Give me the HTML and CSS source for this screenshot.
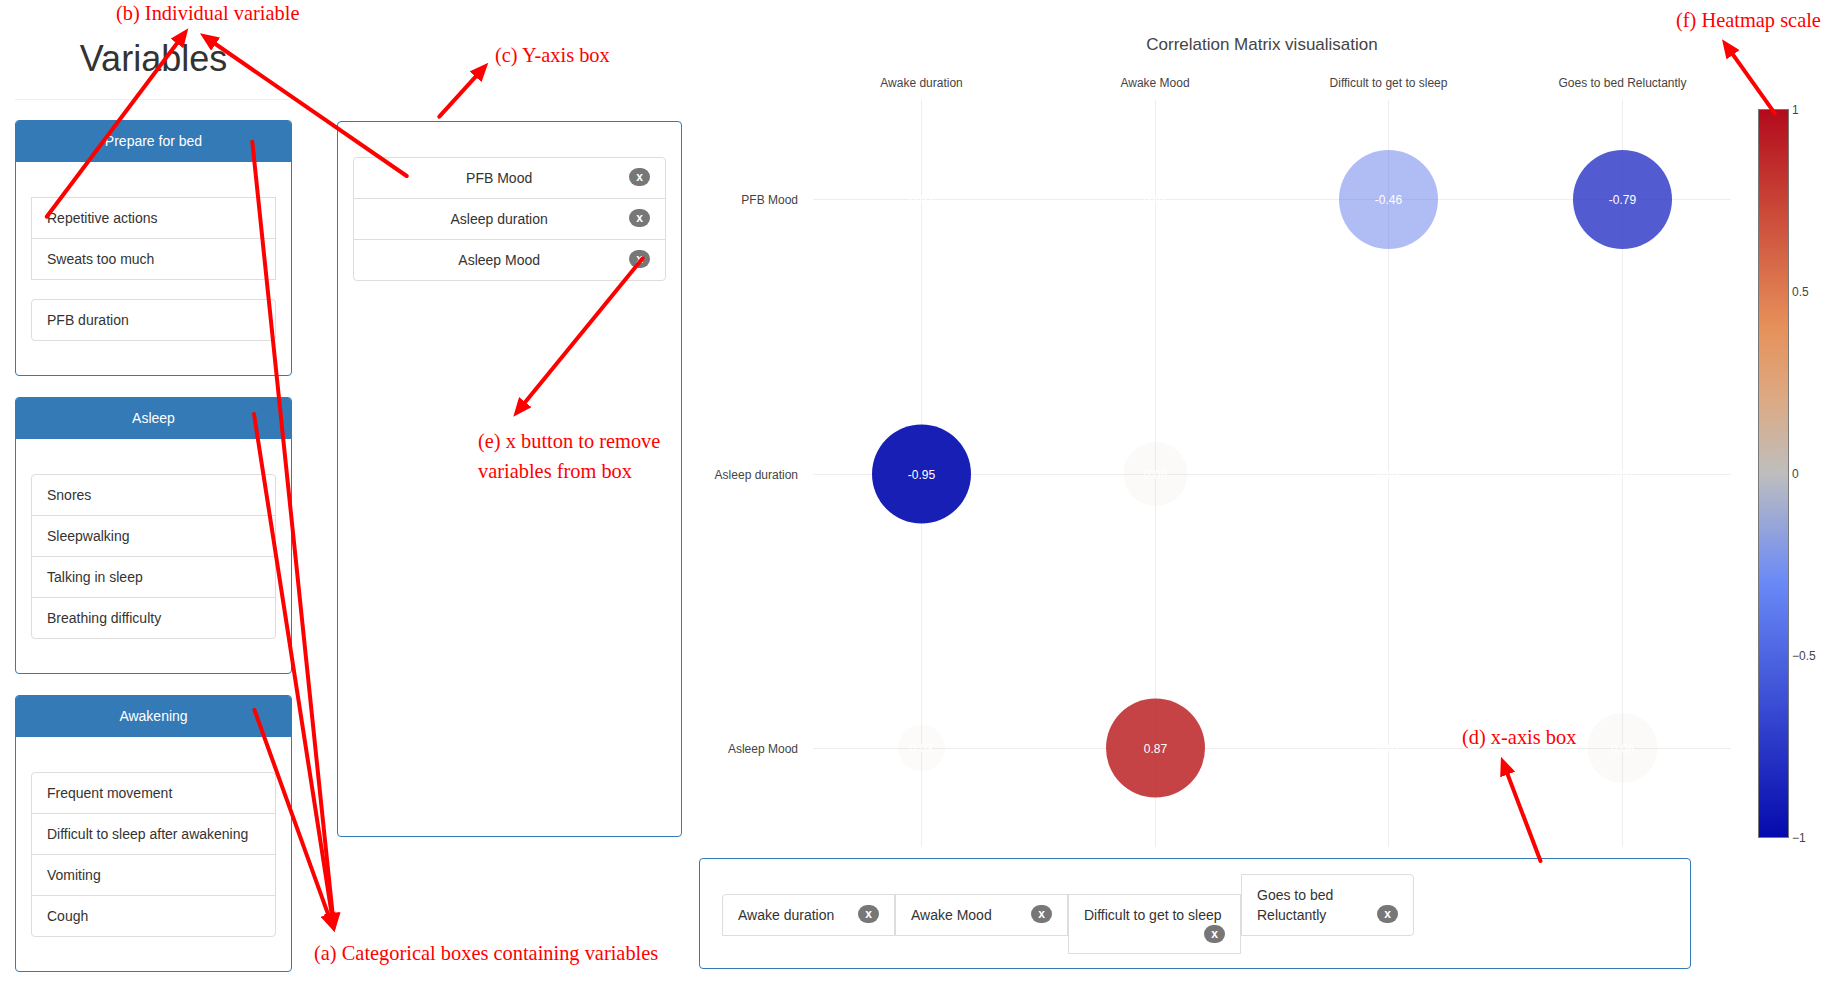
FILE: index.html
```html
<!DOCTYPE html>
<html>
<head>
<meta charset="utf-8">
<title>Correlation Matrix</title>
<link rel="stylesheet" href="styles.css">
</head>
<body>
<div class="page">
  <div class="left">
    <h1 class="title">Variables</h1>
    <hr class="rule">
    <div class="panel">
      <div class="panel-heading">Prepare for bed</div>
      <div class="panel-body">
        <ul class="list-group square">
          <li class="list-group-item">Repetitive actions</li>
          <li class="list-group-item">Sweats too much</li>
        </ul>
        <ul class="list-group">
          <li class="list-group-item">PFB duration</li>
        </ul>
      </div>
    </div>
    <div class="panel">
      <div class="panel-heading">Asleep</div>
      <div class="panel-body">
        <ul class="list-group">
          <li class="list-group-item">Snores</li>
          <li class="list-group-item">Sleepwalking</li>
          <li class="list-group-item">Talking in sleep</li>
          <li class="list-group-item">Breathing difficulty</li>
        </ul>
      </div>
    </div>
    <div class="panel">
      <div class="panel-heading">Awakening</div>
      <div class="panel-body">
        <ul class="list-group">
          <li class="list-group-item">Frequent movement</li>
          <li class="list-group-item">Difficult to sleep after awakening</li>
          <li class="list-group-item">Vomiting</li>
          <li class="list-group-item">Cough</li>
        </ul>
      </div>
    </div>
  </div>

  <div class="ycol">
    <div class="ybox">
      <ul class="list-group centered">
        <li class="list-group-item">PFB Mood<span class="badge">x</span></li>
        <li class="list-group-item">Asleep duration<span class="badge">x</span></li>
        <li class="list-group-item">Asleep Mood<span class="badge">x</span></li>
      </ul>
    </div>
  </div>

  <div class="right">
    <svg class="chart" width="1151" height="850" viewBox="690 0 1151 850" xmlns="http://www.w3.org/2000/svg">
      <defs>
        <linearGradient id="rdbu" x1="0" y1="0" x2="0" y2="1">
          <stop offset="0" stop-color="rgb(178,10,28)"/>
          <stop offset="0.3" stop-color="rgb(230,145,90)"/>
          <stop offset="0.4" stop-color="rgb(220,170,132)"/>
          <stop offset="0.5" stop-color="rgb(190,190,190)"/>
          <stop offset="0.65" stop-color="rgb(106,137,247)"/>
          <stop offset="1" stop-color="rgb(5,10,172)"/>
        </linearGradient>
      </defs>

      <text class="ctitle" x="1262" y="49.5" text-anchor="middle">Correlation Matrix visualisation</text>

      <g class="grid">
        <line x1="813" y1="199.5" x2="1731" y2="199.5"/>
        <line x1="813" y1="474.5" x2="1731" y2="474.5"/>
        <line x1="813" y1="748.5" x2="1731" y2="748.5"/>
        <line x1="921.5" y1="100" x2="921.5" y2="847"/>
        <line x1="1155.5" y1="100" x2="1155.5" y2="847"/>
        <line x1="1388.5" y1="100" x2="1388.5" y2="847"/>
        <line x1="1622.5" y1="100" x2="1622.5" y2="847"/>
      </g>

      <g class="axis">
        <text x="921.5" y="87" text-anchor="middle">Awake duration</text>
        <text x="1155" y="87" text-anchor="middle">Awake Mood</text>
        <text x="1388.5" y="87" text-anchor="middle">Difficult to get to sleep</text>
        <text x="1622.5" y="87" text-anchor="middle">Goes to bed Reluctantly</text>
        <text x="798" y="204" text-anchor="end">PFB Mood</text>
        <text x="798" y="478.5" text-anchor="end">Asleep duration</text>
        <text x="798" y="753" text-anchor="end">Asleep Mood</text>
      </g>

      <g class="bubbles">
        <circle cx="1388.5" cy="199.5" r="49.5" fill="rgb(83,108,230)" fill-opacity="0.46"/>
        <circle cx="1622.5" cy="199.5" r="49.5" fill="rgb(35,48,195)" fill-opacity="0.79"/>
        <circle cx="921.5" cy="474" r="49.5" fill="rgb(12,19,177)" fill-opacity="0.95"/>
        <circle cx="1155.5" cy="474" r="32" fill="rgb(205,185,165)" fill-opacity="0.07"/>
        <circle cx="921.5" cy="748" r="23.5" fill="rgb(205,185,165)" fill-opacity="0.05"/>
        <circle cx="1155.5" cy="748" r="49.5" fill="rgb(189,39,41)" fill-opacity="0.87"/>
        <circle cx="1622.5" cy="748" r="35" fill="rgb(205,185,165)" fill-opacity="0.07"/>
      </g>

      <g class="vals">
        <text x="921.5" y="204">0.02</text>
        <text x="1155.5" y="204">0.01</text>
        <text x="1388.5" y="204">-0.46</text>
        <text x="1622.5" y="204">-0.79</text>
        <text x="921.5" y="478.5">-0.95</text>
        <text x="1155.5" y="478.5">0.05</text>
        <text x="1388.5" y="478.5">0.01</text>
        <text x="1622.5" y="478.5">0.02</text>
        <text x="921.5" y="752.5">0.03</text>
        <text x="1155.5" y="752.5">0.87</text>
        <text x="1388.5" y="752.5">0.01</text>
        <text x="1622.5" y="752.5">0.06</text>
      </g>

      <rect class="cbar" x="1758.5" y="109.5" width="30" height="728" fill="url(#rdbu)"/>
      <g class="ticks">
        <text x="1792" y="113.5">1</text>
        <text x="1792" y="296">0.5</text>
        <text x="1792" y="477.5">0</text>
        <text x="1792" y="660">−0.5</text>
        <text x="1792" y="841.5">−1</text>
      </g>
    </svg>

    <div class="xbox">
      <ul class="xlist"><li class="xitem first">Awake duration<span class="badge">x</span></li><li class="xitem">Awake Mood<span class="badge">x</span></li><li class="xitem">Difficult to get to sleep<span class="badge">x</span></li><li class="xitem last">Goes to bed Reluctantly<span class="badge">x</span></li></ul>
    </div>
  </div>
</div>

<div class="note note-a">(a) Categorical boxes containing variables</div>
<div class="note note-b">(b) Individual variable</div>
<div class="note note-c">(c) Y-axis box</div>
<div class="note note-d">(d) x-axis box</div>
<div class="note note-e">(e) x button to remove<br>variables from box</div>
<div class="note note-f">(f) Heatmap scale</div>

<svg class="arrows" width="1841" height="993" viewBox="0 0 1841 993" xmlns="http://www.w3.org/2000/svg">
  <defs>
    <marker id="ah" markerUnits="userSpaceOnUse" markerWidth="19" markerHeight="16" refX="9" refY="8" orient="auto">
      <path d="M0,0 L19,8 L0,16 Z" fill="#ff0000"/>
    </marker>
  </defs>
  <g class="arrow-lines">
    <line x1="46.7" y1="216.7" x2="182.3" y2="36.3" marker-end="url(#ah)"/>
    <line x1="406.7" y1="176" x2="208.2" y2="39.0" marker-end="url(#ah)"/>
    <line x1="439.3" y1="116.7" x2="481.6" y2="70.1" marker-end="url(#ah)"/>
    <line x1="642.7" y1="258.3" x2="519.6" y2="409.1" marker-end="url(#ah)"/>
    <line x1="1540.5" y1="861" x2="1504.5" y2="766.1" marker-end="url(#ah)"/>
    <line x1="1774.8" y1="113.3" x2="1727.8" y2="47.4" marker-end="url(#ah)"/>
    <line x1="252.3" y1="141.7" x2="333.5" y2="922.1" marker-end="url(#ah)"/>
    <line x1="254" y1="414" x2="333.0" y2="922.1" marker-end="url(#ah)"/>
    <line x1="254.5" y1="710" x2="331.1" y2="922.6" marker-end="url(#ah)"/>
  </g>
</svg>
</body>
</html>
```

FILE: styles.css
```css
* { box-sizing: border-box; }

html, body {
  margin: 0;
  padding: 0;
}

body {
  width: 1841px;
  height: 993px;
  overflow: hidden;
  position: relative;
  background: #fff;
  color: #333;
  font-family: "Liberation Sans", Arial, sans-serif;
  font-size: 14px;
  line-height: 20px;
}

.page {
  display: flex;
  align-items: flex-start;
}

/* ---------- left column ---------- */
.left {
  flex: none;
  width: 277px;
  margin-left: 15px;
}

.title {
  margin: 39px 0 0;
  font-size: 36px;
  font-weight: 500;
  line-height: 1.1;
  text-align: center;
  color: #333;
}

.rule {
  margin: 20px 0;
  height: 0;
  border: 0;
  border-top: 1px solid #eee;
}

.panel {
  margin-bottom: 21px;
  border: 1px solid #337ab7;
  border-radius: 4px;
  background: #fff;
}

.panel-heading {
  padding: 10px 15px;
  background: #337ab7;
  border-bottom: 1px solid #337ab7;
  border-radius: 3px 3px 0 0;
  color: #fff;
  text-align: center;
}

.panel-body {
  padding: 35px 15px 15px;
}

.list-group {
  list-style: none;
  margin: 0 0 20px;
  padding: 0;
}

.list-group-item {
  position: relative;
  display: block;
  padding: 10px 15px;
  margin-bottom: -1px;
  border: 1px solid #ddd;
  background: #fff;
}

.list-group-item:first-child {
  border-top-left-radius: 4px;
  border-top-right-radius: 4px;
}

.list-group-item:last-child {
  border-bottom-left-radius: 4px;
  border-bottom-right-radius: 4px;
}

.list-group.square .list-group-item {
  border-radius: 0;
}

.badge {
  float: right;
  padding: 3px 7px;
  font-size: 12px;
  font-weight: bold;
  line-height: 1;
  color: #fff;
  background: #777;
  border-radius: 10px;
}

/* ---------- y axis box ---------- */
.ycol {
  flex: none;
  width: 345px;
  margin-left: 45px;
  padding-top: 121px;
}

.ybox {
  height: 716px;
  padding: 35px 15px;
  border: 1px solid #337ab7;
  border-radius: 4px;
}

.centered .list-group-item {
  text-align: center;
}

/* ---------- right column / chart ---------- */
.right {
  flex: none;
  width: 1151px;
  margin-left: 8px;
}

.chart {
  display: block;
}

.chart text {
  font-family: "Liberation Sans", Arial, sans-serif;
  font-size: 12px;
  fill: #444;
}

.chart .ctitle {
  font-size: 17px;
}

.grid line {
  stroke: #eee;
  stroke-width: 1;
}

.vals text {
  fill: #fff;
  text-anchor: middle;
}

.cbar {
  stroke: #777;
  stroke-width: 1;
}

.xbox {
  width: 992px;
  margin: 8px 0 0 9px;
  padding: 15px 15px 14px 22px;
  border: 1px solid #337ab7;
  border-radius: 4px;
}

.xlist {
  list-style: none;
  margin: 0;
  padding: 0;
}

.xitem {
  display: inline-block;
  vertical-align: baseline;
  width: 173px;
  padding: 10px 15px;
  border: 1px solid #ddd;
  background: #fff;
}

.xitem.first {
  border-top-left-radius: 4px;
}

.xitem.last {
  border-radius: 0 4px 4px 0;
}

/* ---------- annotations ---------- */
.note {
  position: absolute;
  font-family: "Liberation Serif", "Times New Roman", serif;
  font-size: 20.4px;
  line-height: 20px;
  color: #ff0000;
  white-space: nowrap;
}

.note-a { left: 314px; top: 943px; }
.note-b { left: 116px; top: 3px; }
.note-c { left: 495px; top: 45px; }
.note-d { left: 1462px; top: 727px; }
.note-e { left: 478px; top: 427px; line-height: 29.5px; }
.note-f { left: 1676px; top: 10px; }

.arrows {
  position: absolute;
  left: 0;
  top: 0;
  pointer-events: none;
}

.arrow-lines line {
  stroke: #ff0000;
  stroke-width: 4;
  stroke-linecap: round;
}
```
